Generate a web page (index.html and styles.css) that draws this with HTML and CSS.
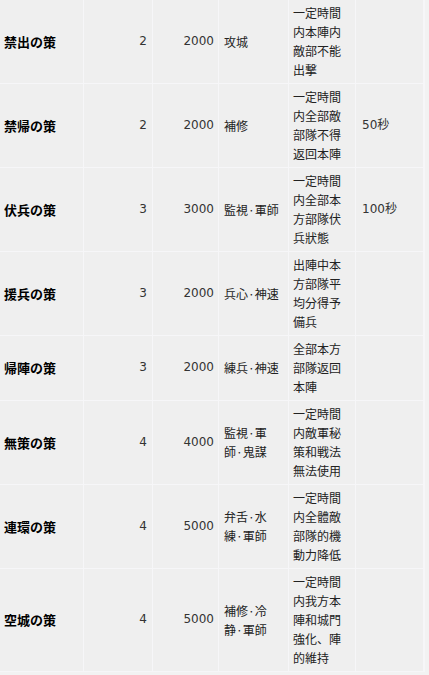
FILE: index.html
```html
<!DOCTYPE html>
<html lang="ja">
<head>
<meta charset="utf-8">
<title>策</title>
<link rel="stylesheet" href="styles.css">
</head>
<body>
<div class="table">
  <div class="cell name">禁出の策</div>
  <div class="cell num">2</div>
  <div class="cell cost">2000</div>
  <div class="cell skill">攻城</div>
  <div class="cell desc">一定時間内本陣内敵部不能出撃</div>
  <div class="cell time"></div>

  <div class="cell name">禁帰の策</div>
  <div class="cell num">2</div>
  <div class="cell cost">2000</div>
  <div class="cell skill">補修</div>
  <div class="cell desc">一定時間内全部敵部隊不得返回本陣</div>
  <div class="cell time">50秒</div>

  <div class="cell name">伏兵の策</div>
  <div class="cell num">3</div>
  <div class="cell cost">3000</div>
  <div class="cell skill">監視·軍師</div>
  <div class="cell desc">一定時間内全部本方部隊伏兵狀態</div>
  <div class="cell time">100秒</div>

  <div class="cell name">援兵の策</div>
  <div class="cell num">3</div>
  <div class="cell cost">2000</div>
  <div class="cell skill">兵心·神速</div>
  <div class="cell desc">出陣中本方部隊平均分得予備兵</div>
  <div class="cell time"></div>

  <div class="cell name">帰陣の策</div>
  <div class="cell num">3</div>
  <div class="cell cost">2000</div>
  <div class="cell skill">練兵·神速</div>
  <div class="cell desc">全部本方部隊返回本陣</div>
  <div class="cell time"></div>

  <div class="cell name">無策の策</div>
  <div class="cell num">4</div>
  <div class="cell cost">4000</div>
  <div class="cell skill">監視·軍<br>師·鬼謀</div>
  <div class="cell desc">一定時間内敵軍秘策和戦法無法使用</div>
  <div class="cell time"></div>

  <div class="cell name">連環の策</div>
  <div class="cell num">4</div>
  <div class="cell cost">5000</div>
  <div class="cell skill">弁舌·水<br>練·軍師</div>
  <div class="cell desc">一定時間内全體敵部隊的機動力降低</div>
  <div class="cell time"></div>

  <div class="cell name">空城の策</div>
  <div class="cell num">4</div>
  <div class="cell cost">5000</div>
  <div class="cell skill">補修·冷<br>静·軍師</div>
  <div class="cell desc">一定時間内我方本陣和城門強化、陣的維持</div>
  <div class="cell time"></div>
</div>
</body>
</html>
```

FILE: styles.css
```css
html, body {
  margin: 0;
  padding: 0;
  background: #f2f2f2;
}

.table {
  display: grid;
  grid-template-columns: 84px 69px 66px 70px 67px 68px;
  width: 424px;
  background: #f0f0f0;
  border-right: 1px solid #f6f6f8;
  font-family: "Noto Sans CJK JP", sans-serif;
  font-size: 12px;
  line-height: 19px;
  color: #222;
}

.cell {
  display: flex;
  align-items: center;
  box-sizing: border-box;
  padding: 3px 5px 4px;
  border-right: 1px solid #f6f6f8;
  border-bottom: 1px solid #f6f6f8;
  background: #efefef;
}

.name {
  padding-left: 4px;
  font-size: 13px;
  font-weight: bold;
  color: #000;
}

.num,
.cost {
  justify-content: flex-end;
  font-family: "DejaVu Sans", sans-serif;
  color: #333;
}

.num {
  padding-right: 5px;
}

.cost {
  padding-right: 4px;
}

.skill {
  white-space: nowrap;
  padding-left: 5px;
}

.desc {
  padding-left: 4px;
  padding-right: 10px;
}

.time {
  padding-left: 6px;
  font-family: "DejaVu Sans", "Noto Sans CJK JP", sans-serif;
  color: #333;
}
```
